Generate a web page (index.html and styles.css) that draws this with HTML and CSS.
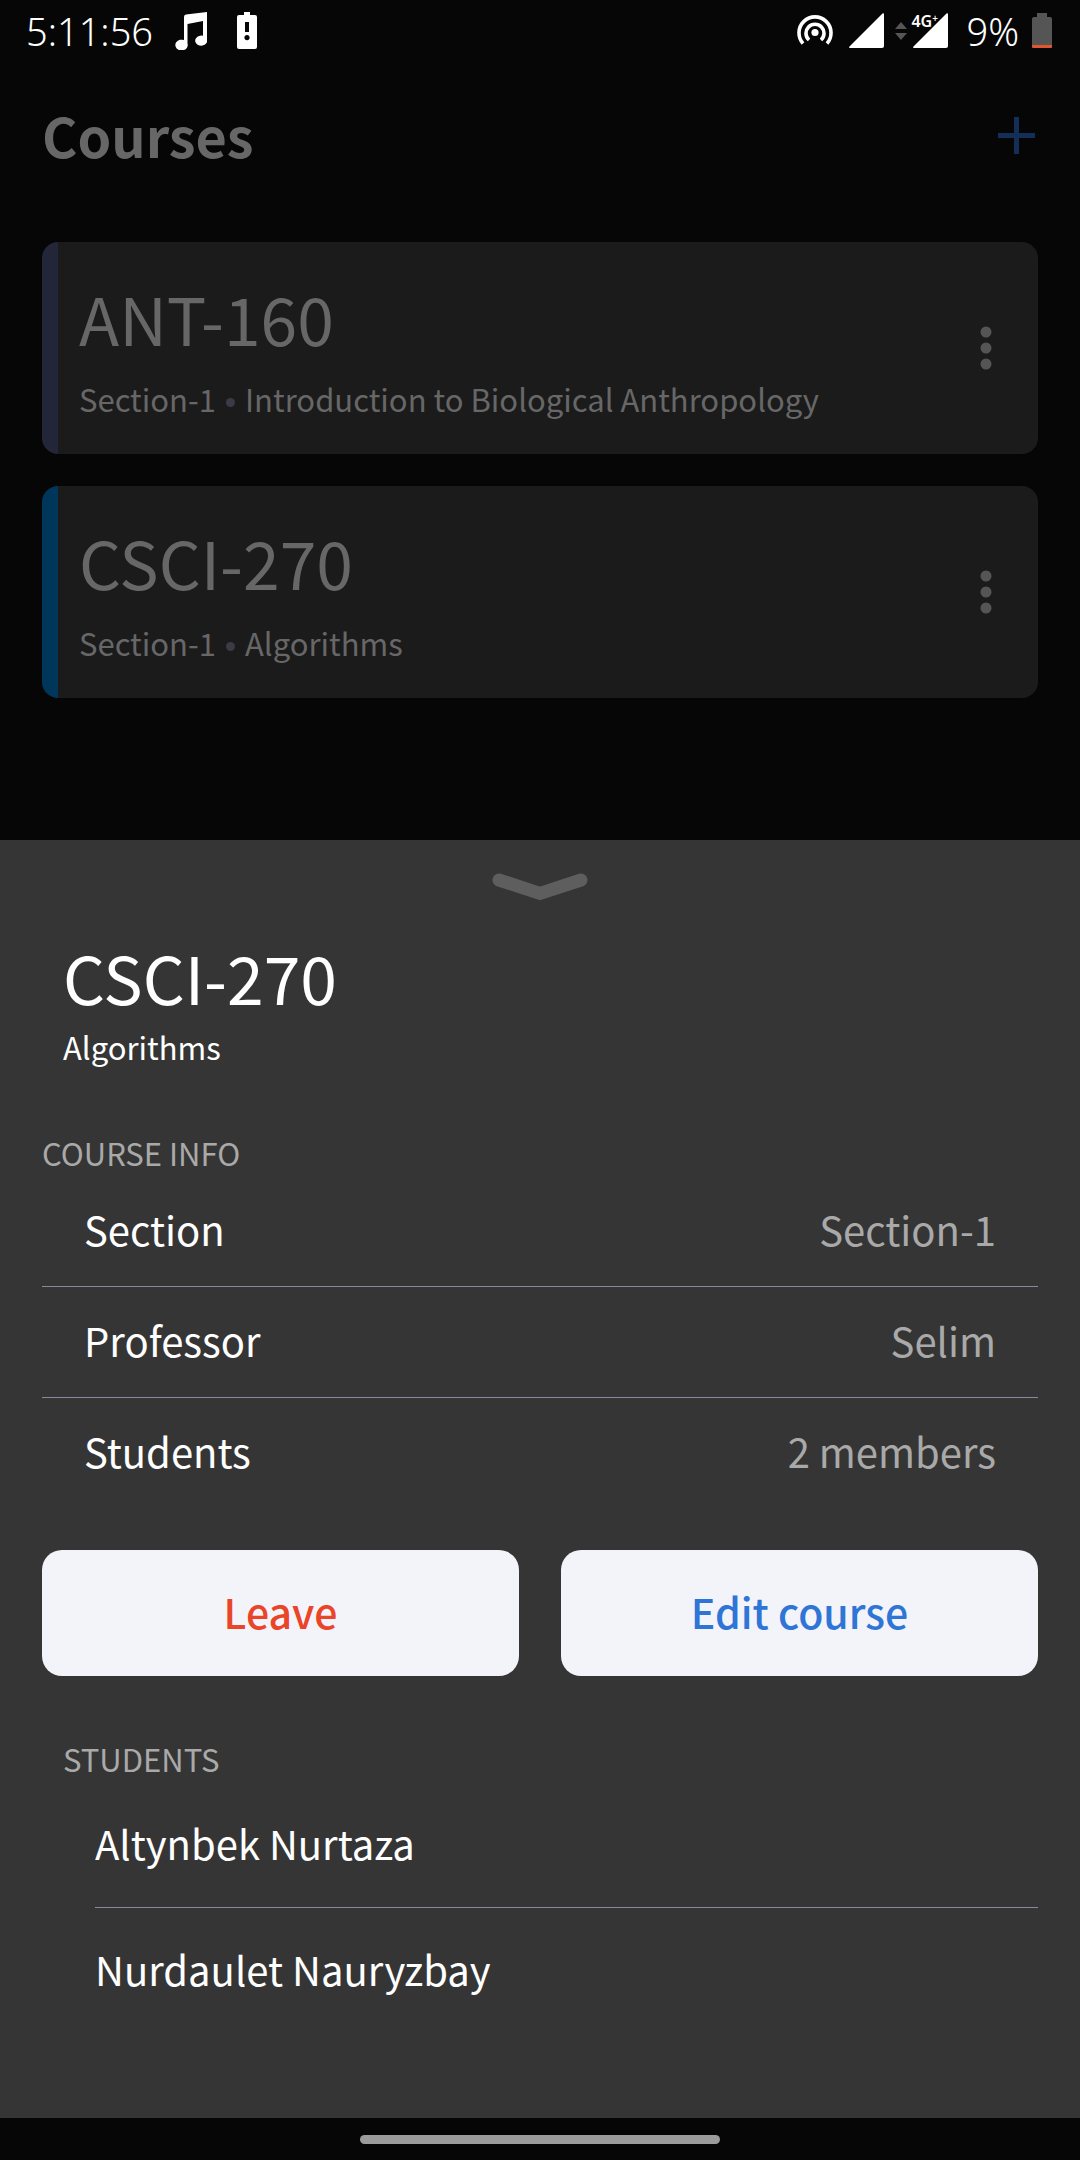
FILE: index.html
```html
<!DOCTYPE html>
<html lang="en">
<head>
  <meta charset="utf-8">
  <meta name="viewport" content="width=device-width, initial-scale=1">
  <title>Courses</title>
  <link rel="stylesheet" href="styles.css">
</head>
<body>
  <div class="status-bar">
    <div class="status-left">
      <span class="status-text">5:11:56</span>
      <svg class="music-icon" width="32" height="38" viewBox="0 0 32 38" aria-hidden="true">
        <path fill="#fff" d="M9 5Q9 3 11 2.600L32 0V27.500A6 5 0 1 1 25 23.800Q27 23.400 28 23.800V9L12.500 12V31.500A6.200 5.400 0 1 1 5 27.800Q8 27.400 9 28Z"/>
      </svg>
      <svg width="20" height="38" viewBox="0 0 20 38" aria-hidden="true">
        <path fill="#fff" fill-rule="evenodd" d="M7 0h6v3h5q2 0 2 2v30q0 2-2 2H2q-2 0-2-2V5q0-2 2-2h5zM8 10v10h4V10zM10 23a2.600 2.600 0 1 0 .01 0z"/>
      </svg>
    </div>
    <div class="status-right">
      <svg width="36" height="36" viewBox="0 0 36 36" aria-hidden="true">
        <circle cx="18" cy="19.500" r="3.600" fill="#fff"/>
        <path d="M12 27A9 9 0 1 1 24 27M6 30.500A16 16 0 1 1 30 30.500" fill="none" stroke="#fff" stroke-width="3.600"/>
      </svg>
      <svg class="signal" width="35" height="36" viewBox="0 0 35 36" aria-hidden="true">
        <path fill="#fff" d="M0 34L33.500 .5Q35 0 35 1V33q0 2-2 2H1q-1 0-1-1z"/>
      </svg>
      <svg class="data-arrows" width="12" height="18" viewBox="0 0 12 18" aria-hidden="true">
        <path fill="#555" d="M0 7L6 0l6 7zM0 11h12l-6 7z"/>
      </svg>
      <span class="network">
        <svg width="35" height="36" viewBox="0 0 35 36" aria-hidden="true">
          <path fill="#fff" d="M0 34L33.500 .5Q35 0 35 1V33q0 2-2 2H1q-1 0-1-1z"/>
        </svg>
        <span class="network-type">4G<span class="network-plus">+</span></span>
      </span>
      <span class="status-text battery-level">9%</span>
      <svg width="20" height="36" viewBox="0 0 20 36" aria-hidden="true">
        <path fill="#555" d="M5 0h10v4h3q2 0 2 2v26H0V6q0-2 2-2h3z"/>
        <path fill="#e0562f" d="M0 32h20v2q0 1-1 1H1q-1 0-1-1z"/>
      </svg>
    </div>
  </div>

  <main class="courses">
    <header class="courses-header">
      <h1 class="page-title">Courses</h1>
      <button class="icon-button" type="button" aria-label="Add course">
        <svg width="37" height="37" viewBox="0 0 37 37" aria-hidden="true">
          <path d="M18.500 0V37M0 18.500H37" stroke="#152e57" stroke-width="5"/>
        </svg>
      </button>
    </header>
    <div class="course-list">
      <article class="course-card course-card-slate">
        <div class="course-text">
          <h2 class="course-code">ANT-160</h2>
          <p class="course-meta"><span>Section-1</span><span class="dot"></span><span>Introduction to Biological Anthropology</span></p>
        </div>
        <button class="icon-button" type="button" aria-label="ANT-160 options">
          <svg width="12" height="44" viewBox="0 0 12 44" fill="#555" aria-hidden="true">
            <circle cx="6" cy="6" r="5.500"/><circle cx="6" cy="22" r="5.500"/><circle cx="6" cy="38" r="5.500"/>
          </svg>
        </button>
      </article>
      <article class="course-card course-card-blue">
        <div class="course-text">
          <h2 class="course-code">CSCI-270</h2>
          <p class="course-meta"><span>Section-1</span><span class="dot"></span><span>Algorithms</span></p>
        </div>
        <button class="icon-button" type="button" aria-label="CSCI-270 options">
          <svg width="12" height="44" viewBox="0 0 12 44" fill="#555" aria-hidden="true">
            <circle cx="6" cy="6" r="5.500"/><circle cx="6" cy="22" r="5.500"/><circle cx="6" cy="38" r="5.500"/>
          </svg>
        </button>
      </article>
    </div>
  </main>

  <section class="sheet" aria-label="Course details">
    <button class="sheet-handle" type="button" aria-label="Close details">
      <svg width="96" height="28" viewBox="0 0 96 28" aria-hidden="true">
        <path d="M7 7L48 20.500L89 7" fill="none" stroke="#5e5e5e" stroke-width="13" stroke-linecap="round"/>
      </svg>
    </button>
    <div class="sheet-title">
      <h2 class="course-code">CSCI-270</h2>
      <p class="sheet-subtitle">Algorithms</p>
    </div>

    <h3 class="section-label">COURSE INFO</h3>
    <dl class="info">
      <div class="info-row"><dt>Section</dt><dd>Section-1</dd></div>
      <div class="info-row"><dt>Professor</dt><dd>Selim</dd></div>
      <div class="info-row"><dt>Students</dt><dd>2 members</dd></div>
    </dl>

    <div class="actions">
      <button class="action action-leave" type="button">Leave</button>
      <button class="action action-edit" type="button">Edit course</button>
    </div>

    <h3 class="section-label students-label">STUDENTS</h3>
    <ul class="students">
      <li class="student">Altynbek Nurtaza</li>
      <li class="student">Nurdaulet Nauryzbay</li>
    </ul>
  </section>

  <div class="nav-bar"><span class="nav-pill"></span></div>
</body>
</html>
```
FILE: styles.css
```css
* {
  box-sizing: border-box;
  margin: 0;
  padding: 0;
}

body {
  display: flex;
  flex-direction: column;
  min-height: 100vh;
  background: #060606;
  color: #fff;
  font-family: "Noto Sans CJK SC", "Noto Sans", sans-serif;
  font-size: 40px;
  line-height: 60px;
}

h1, h2, h3 {
  font-weight: 400;
}

svg {
  display: block;
}

button {
  border: 0;
  background: none;
  font: inherit;
  cursor: pointer;
}

/* Status bar */
.status-bar {
  display: flex;
  justify-content: space-between;
  align-items: center;
  height: 62px;
  padding: 0 28px 0 26px;
}

.status-left,
.status-right {
  display: flex;
  align-items: center;
}

.status-text {
  font-family: "Noto Sans", sans-serif;
  font-size: 38px;
  font-weight: 300;
}

.music-icon {
  margin: 0 30px 0 22px;
}

.signal {
  margin-left: 16px;
}

.data-arrows {
  margin: 0 6px 0 11px;
}

.network {
  position: relative;
}

.network-type {
  position: absolute;
  top: -3px;
  left: -2px;
  font-family: "Noto Sans", sans-serif;
  font-size: 16px;
  font-weight: 600;
  line-height: 16px;
  white-space: nowrap;
}

.network-plus {
  font-size: 10px;
  vertical-align: 5px;
}

.battery-level {
  margin: 0 13px 0 18px;
}

/* Course list */
.courses {
  padding: 33px 42px 142px;
}

.courses-header {
  display: flex;
  justify-content: space-between;
  align-items: center;
  margin-bottom: 67px;
}

.page-title {
  color: #676767;
  font-size: 54px;
  font-weight: 700;
  line-height: 80px;
}

.courses-header .icon-button {
  padding: 3px;
}

.course-list {
  display: flex;
  flex-direction: column;
  gap: 32px;
}

.course-card {
  display: flex;
  justify-content: space-between;
  align-items: center;
  padding: 35px 46px 35px 21px;
  border-left: 16px solid;
  border-radius: 16px;
  background: #1b1b1b;
  color: #676767;
}

.course-card-slate {
  border-left-color: #232539;
}

.course-card-blue {
  border-left-color: #003659;
}

.course-text {
  display: flex;
  flex-direction: column;
  gap: 22px;
}

.course-code {
  font-size: 66px;
  line-height: 80px;
}

.course-meta {
  display: flex;
  align-items: center;
  font-size: 31px;
  line-height: 40px;
}

.dot {
  width: 9px;
  height: 9px;
  margin: 6px 10px 0;
  border-radius: 50%;
  background: #3a3b46;
}

/* Details sheet */
.sheet {
  flex: 1;
  padding: 33px 42px 85px;
  background: #353535;
}

.sheet-handle {
  display: block;
  margin: 0 auto 35px;
}

.sheet-title {
  display: flex;
  flex-direction: column;
  gap: 11px;
  margin-bottom: 66px;
  padding-left: 21px;
}

.sheet-subtitle,
.section-label {
  font-size: 31px;
  line-height: 40px;
}

.section-label {
  color: #a9a9a9;
}

.info {
  margin-top: 3px;
}

.info-row {
  display: flex;
  justify-content: space-between;
  padding: 23px 42px 27px;
}

.info-row + .info-row,
.student + .student {
  border-top: 1px solid #8789a0;
}

.info-row dd {
  color: #a9a9a9;
}

.actions {
  display: grid;
  grid-template-columns: 1fr 1fr;
  gap: 42px;
  margin: 42px 0 63px;
}

.action {
  padding: 31px 0 35px;
  border-radius: 20px;
  background: #f3f3fa;
  font-size: 41px;
  font-weight: 500;
}

.action-leave {
  color: #ea4528;
}

.action-edit {
  color: #2e75d6;
}

.students-label {
  padding-left: 21px;
}

.students {
  margin: 3px 0 0 53px;
  list-style: none;
}

.student {
  padding: 31px 0 34px;
}

/* System navigation */
.nav-bar {
  display: flex;
  justify-content: center;
  padding: 17px 0 16px;
}

.nav-pill {
  width: 33.333%;
  height: 9px;
  border-radius: 5px;
  background: #9b9b9b;
}
```
